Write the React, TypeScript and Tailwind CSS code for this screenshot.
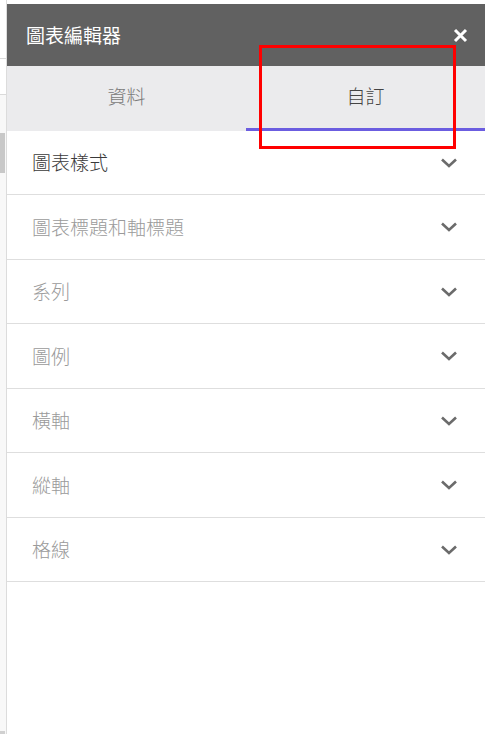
const sections = ["圖表樣式", "圖表標題和軸標題", "系列", "圖例", "橫軸", "縱軸", "格線"];

function Chevron() {
  return (
    <svg width="18" height="12" viewBox="0 0 18 12" fill="none">
      <path d="M2 2.5l7 6.5 7-6.5" stroke="#6b6b6b" strokeWidth="2.6" strokeLinecap="butt" />
    </svg>
  );
}

export default function App() {
  return (
    <div
      className="flex h-[734px] w-[485px] overflow-hidden bg-white"
      style={{ fontFamily: '"Noto Sans CJK TC", "Noto Sans", sans-serif' }}
    >
      {/* sheet peeking out on the left */}
      <div className="flex w-[7px] flex-col border-r border-[#dcdcdc] bg-[#f8f8f8]">
        <div className="h-[59px] border-b border-[#dadada] bg-white" />
        <div className="h-[36px] border-b border-[#dadada] bg-white" />
        <div className="h-[38px]" />
        <div className="h-[40px] w-[5px] bg-[#c8c8c8]" />
        <div className="flex-1" />
        <div className="h-[3px] w-[5px] bg-[#d0d0d0]" />
      </div>

      <div className="relative flex flex-1 flex-col pt-[4px] font-light">
        <div className="flex h-[62px] items-center justify-between bg-[#616161] pl-[19px] pr-[17px]">
          <span className="text-[19px] font-normal text-white">圖表編輯器</span>
          <svg width="15" height="15" viewBox="0 0 15 15">
            <path d="M2 2l11 11M13 2L2 13" stroke="#fff" strokeWidth="3" />
          </svg>
        </div>

        <div className="flex h-[65px] bg-[#ebebed]">
          <div className="flex flex-1 items-center justify-center border-b-[3px] border-transparent pb-[2px] text-[19px] text-[#7a7a7a]">
            資料
          </div>
          <div className="flex flex-1 items-center justify-center border-b-[3px] border-[#6b5de0] pb-[2px] text-[19px] text-[#444]">
            自訂
          </div>
        </div>

        <div className="flex flex-col">
          {sections.map((s, i) => (
            <div
              key={s}
              className={
                "flex items-center justify-between border-b border-[#dedede] pl-[25px] pr-[27px] " +
                (i % 2 === 0 ? "h-[64px]" : "h-[65px]")
              }
            >
              <span className={"text-[19px] " + (i === 0 ? "text-[#3a3a3a]" : "text-[#9a9a9a]")}>{s}</span>
              <Chevron />
            </div>
          ))}
        </div>

        {/* highlight box */}
        <div className="absolute left-[252px] top-[45px] h-[104px] w-[197px] border-[3px] border-[#ff0000]" />
      </div>
    </div>
  );
}
